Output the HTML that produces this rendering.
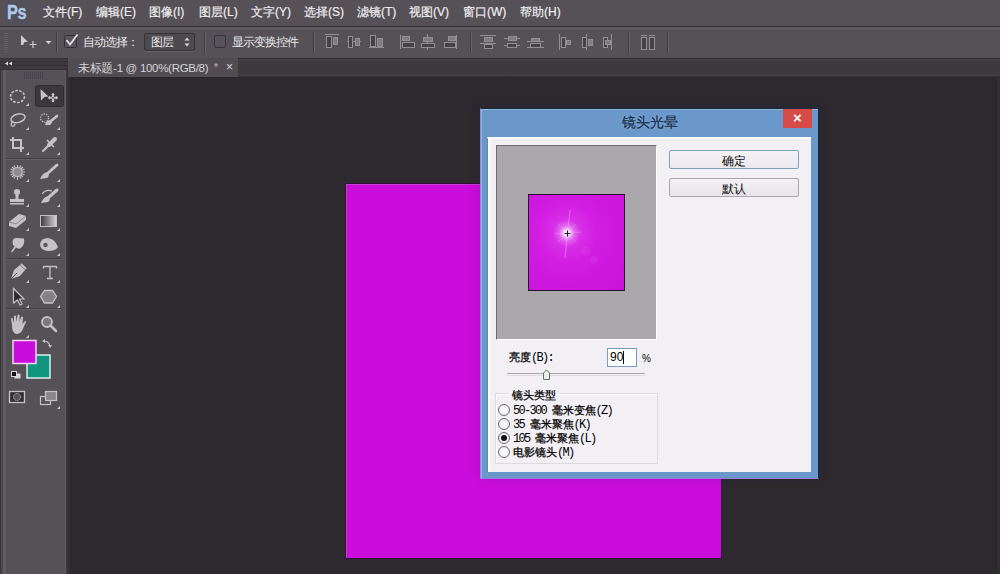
<!DOCTYPE html>
<html><head><meta charset="utf-8">
<style>
*{box-sizing:border-box;margin:0;padding:0}
html,body{width:1000px;height:574px;overflow:hidden;background:#2d292e;font-family:"Liberation Sans",sans-serif;position:relative}
.a{position:absolute}
#menubar{left:0;top:0;width:1000px;height:26px;background:#555157}
#menubar .m{position:absolute;top:4px;font-size:12px;color:#efedef;line-height:16px;white-space:nowrap;-webkit-text-stroke:0.2px #efedef}
#mline{left:0;top:26px;width:1000px;height:1px;background:#2f2c31}
#toolbar{left:0;top:27px;width:1000px;height:31px;background:linear-gradient(#5d5a5f 0,#5d5a5f 3px,#4f4b51 3px,#514d53 4px,#555157 5px)}
#tline{left:0;top:58px;width:1000px;height:1px;background:#2b282c}
#tabbar{left:69px;top:59px;width:931px;height:19px;background:linear-gradient(#48444a 0,#48444a 1px,#3d393e 1px,#3c383d 13px,#413d42 17px,#2a262b 18px)}
#tab{left:68px;top:58px;width:170px;height:19px;background:#504c52}
#canvasbg{left:70px;top:77px;width:931px;height:497px;background:#2d292e}
#panel{left:0;top:58px;width:67px;height:516px;background:#555157}
#paneltop{left:0;top:58px;width:67px;height:12px;background:#3b373c}
#pstrip{left:66px;top:58px;width:5px;height:516px;background:linear-gradient(90deg,#3c383d,#343036 60%,#29262a)}
.sep{position:absolute;width:1px;height:21px;top:32px;background:#3f3b41;box-shadow:1px 0 0 #66626a}
.txt{position:absolute;font-size:12px;color:#e8e6e8;white-space:nowrap;line-height:14px}
#doc{left:346px;top:184px;width:375px;height:374px;background:#cb0ddc;box-shadow:0 0 0 1px #2e1234,inset 1px 1px 0 #c23fd0}
#dlg{left:480px;top:108px;width:339px;height:371px;background:#6a98cb;border:1px solid #1c2a3c;border-left-color:#8a8ad6;border-bottom:1px solid #9a7fd8;box-shadow:0 0 10px rgba(30,30,90,0.18),inset 1px 1px 0 #8db6df}
#client{left:487px;top:137px;width:324px;height:335px;background:#f3f0f5;border-top:2px solid #f9fbfd;border-left:1px solid #5f8ca8;box-shadow:inset 1px 0 0 #f9fdff,inset 2px 0 0 #f9fdff}
#close{left:783px;top:109px;width:29px;height:19px;background:#d64b45}
#title{left:480px;top:114px;width:339px;text-align:center;font-size:14px;color:#15304a;line-height:17px;padding-left:1px;text-shadow:0 0 3px #8fb5dc,0 0 0.4px #15304a}
#preview{left:496px;top:145px;width:161px;height:195px;background:#aba8ab;border-top:1px solid #6f6c70;border-left:1px solid #6f6c70;border-right:1px solid #fff;border-bottom:1px solid #fff}
#pmag{left:528px;top:194px;width:97px;height:97px;background:radial-gradient(circle at 39px 39px,#d526e6 0,#d01ae0 40px,#cc12dc 80px);border:1px solid #2a1030}
.btn{position:absolute;left:669px;width:130px;height:19px;background:linear-gradient(#f3f1f3,#e6e4e8);border:1px solid #a9a7ab;border-radius:2px;text-align:center;font-size:12px;line-height:20px;color:#0a0a0a}
.dt{position:absolute;font-size:11px;color:#000;white-space:nowrap;line-height:13px;-webkit-text-stroke:0.25px #000}
.mo{font-family:"Liberation Mono",monospace;font-size:12px;letter-spacing:-1.7px;-webkit-text-stroke:0}
.radio{position:absolute;width:12px;height:12px;border-radius:50%;border:1px solid #6e6e6e;background:radial-gradient(#fff,#e4e4e4)}
</style></head><body>
<div id="menubar" class="a">
  <div class="a" style="left:6px;top:2px;width:24px;height:22px;background:#525059;border:1px solid #4c535e"></div><div class="a" style="left:7px;top:2px;font-size:17px;font-weight:bold;color:#b2c9e6;line-height:20px;letter-spacing:-0.3px;-webkit-text-stroke:0.4px #b2c9e6;transform:scale(0.96,1.14);transform-origin:0 0;text-shadow:0 0 1px #2a3d5a">Ps</div>
  <div class="m" style="left:43px">文件(F)</div>
  <div class="m" style="left:96px">编辑(E)</div>
  <div class="m" style="left:149px">图像(I)</div>
  <div class="m" style="left:199px">图层(L)</div>
  <div class="m" style="left:251px">文字(Y)</div>
  <div class="m" style="left:304px">选择(S)</div>
  <div class="m" style="left:357px">滤镜(T)</div>
  <div class="m" style="left:409px">视图(V)</div>
  <div class="m" style="left:463px">窗口(W)</div>
  <div class="m" style="left:520px">帮助(H)</div>
</div>
<div id="mline" class="a"></div>
<div id="toolbar" class="a"></div>
<div id="tline" class="a"></div>

<!-- toolbar content -->
<div class="txt" style="left:83px;top:35px;letter-spacing:-1px">自动选择：</div>
<div class="a" style="left:144px;top:33px;width:51px;height:18px;background:#4d494f;border:1px solid #353237;border-radius:2px;box-shadow:0 1px 0 #68646a"></div>
<div class="txt" style="left:151px;top:35px;letter-spacing:-1px">图层</div>
<div class="txt" style="left:232px;top:35px;letter-spacing:-1px">显示变换控件</div>
<svg class="a" style="left:0;top:0" width="1000" height="60" viewBox="0 0 1000 60"><rect x="4" y="33" width="4" height="1" fill="#625e64"/><rect x="4" y="35" width="4" height="1" fill="#625e64"/><rect x="4" y="37" width="4" height="1" fill="#625e64"/><rect x="4" y="39" width="4" height="1" fill="#625e64"/><rect x="4" y="41" width="4" height="1" fill="#625e64"/><rect x="4" y="43" width="4" height="1" fill="#625e64"/><rect x="4" y="45" width="4" height="1" fill="#625e64"/><rect x="4" y="47" width="4" height="1" fill="#625e64"/><rect x="4" y="49" width="4" height="1" fill="#625e64"/><rect x="4" y="51" width="4" height="1" fill="#625e64"/><path d="M21 35 L28 42 L24.5 42 L23 45 L21 45 Z" fill="#cfccd0"/><path d="M33 41 V48 M29.5 44.5 H36.5" stroke="#cfccd0" stroke-width="1.2"/><path d="M45.5 41 H51.5 L48.5 44 Z" fill="#d8d5d9"/><rect x="64.5" y="35.5" width="12" height="12" rx="1" fill="#57535a" stroke="#343136"/><path d="M66.5 40 L70 44.5 L77.5 34.5" fill="none" stroke="#e4e1e5" stroke-width="1.8"/><path d="M184.5 40.5 L187 37.5 L189.5 40.5 Z M184.5 43.5 L187 46.5 L189.5 43.5 Z" fill="#dcd9dd"/><rect x="214.5" y="35.5" width="11" height="12" rx="2" fill="#57535a" stroke="#353237"/><path d="M325 34.5 L339 34.5" stroke="#939094" stroke-width="1"/><rect x="326.5" y="36.5" width="5" height="11" fill="#454247" stroke="#939094" stroke-width="1"/><rect x="333.5" y="37.5" width="4" height="7" fill="#7f7c80" stroke="#939094" stroke-width="1"/><path d="M347 41.5 L361 41.5" stroke="#939094" stroke-width="1"/><rect x="348.5" y="36.5" width="4" height="11" fill="#454247" stroke="#939094" stroke-width="1"/><rect x="355.5" y="38.5" width="4" height="7" fill="#7f7c80" stroke="#939094" stroke-width="1"/><path d="M369 47.5 L384 47.5" stroke="#939094" stroke-width="1"/><rect x="370.5" y="35.5" width="5" height="11" fill="#454247" stroke="#939094" stroke-width="1"/><rect x="377.5" y="38.5" width="5" height="8" fill="#7f7c80" stroke="#939094" stroke-width="1"/><path d="M400.5 35 L400.5 49" stroke="#939094" stroke-width="1"/><rect x="402.5" y="36.5" width="7" height="4" fill="#7f7c80" stroke="#939094" stroke-width="1"/><rect x="402.5" y="42.5" width="12" height="5" fill="#454247" stroke="#939094" stroke-width="1"/><path d="M427.5 34 L427.5 50" stroke="#939094" stroke-width="1"/><rect x="423.5" y="37.5" width="9" height="4" fill="#7f7c80" stroke="#939094" stroke-width="1"/><rect x="421.5" y="43.5" width="13" height="4" fill="#454247" stroke="#939094" stroke-width="1"/><path d="M456.5 35 L456.5 49" stroke="#939094" stroke-width="1"/><rect x="448.5" y="36.5" width="7" height="4" fill="#7f7c80" stroke="#939094" stroke-width="1"/><rect x="444.5" y="42.5" width="11" height="5" fill="#454247" stroke="#939094" stroke-width="1"/><path d="M480 35.5 L496 35.5" stroke="#939094" stroke-width="1"/><path d="M480 43.5 L496 43.5" stroke="#939094" stroke-width="1"/><rect x="484.5" y="37.5" width="8" height="4" fill="#7f7c80" stroke="#939094" stroke-width="1"/><rect x="484.5" y="44.5" width="8" height="4" fill="#454247" stroke="#939094" stroke-width="1"/><path d="M504 38.5 L520 38.5" stroke="#939094" stroke-width="1"/><path d="M504 45.5 L520 45.5" stroke="#939094" stroke-width="1"/><rect x="508.5" y="36.5" width="8" height="4" fill="#7f7c80" stroke="#939094" stroke-width="1"/><rect x="507.5" y="43.5" width="9" height="4" fill="#454247" stroke="#939094" stroke-width="1"/><path d="M527 41.5 L544 41.5" stroke="#939094" stroke-width="1"/><path d="M527 47.5 L544 47.5" stroke="#939094" stroke-width="1"/><rect x="531.5" y="38.5" width="8" height="3" fill="#7f7c80" stroke="#939094" stroke-width="1"/><rect x="530.5" y="43.5" width="10" height="4" fill="#454247" stroke="#939094" stroke-width="1"/><path d="M559.5 34 L559.5 50" stroke="#939094" stroke-width="1"/><rect x="561.5" y="37.5" width="4" height="10" fill="#454247" stroke="#939094" stroke-width="1"/><rect x="566.5" y="40.5" width="4" height="4" fill="#7f7c80" stroke="#939094" stroke-width="1"/><path d="M586.5 34 L586.5 50" stroke="#939094" stroke-width="1"/><rect x="582.5" y="37.5" width="4" height="10" fill="#454247" stroke="#939094" stroke-width="1"/><rect x="588.5" y="39.5" width="4" height="6" fill="#7f7c80" stroke="#939094" stroke-width="1"/><path d="M611.5 34 L611.5 50" stroke="#939094" stroke-width="1"/><rect x="603.5" y="37.5" width="4" height="10" fill="#454247" stroke="#939094" stroke-width="1"/><rect x="605.5" y="40.5" width="5" height="4" fill="#7f7c80" stroke="#939094" stroke-width="1"/><rect x="641.5" y="37.5" width="5" height="12" fill="#454247" stroke="#939094" stroke-width="1"/><rect x="649.5" y="37.5" width="5" height="12" fill="#454247" stroke="#939094" stroke-width="1"/><path d="M641 35.5 L647 35.5" stroke="#939094" stroke-width="1"/><path d="M649 35.5 L655 35.5" stroke="#939094" stroke-width="1"/></svg>
<div class="sep" style="left:56px"></div>
<div class="sep" style="left:204px"></div>
<div class="sep" style="left:313px"></div>
<div class="sep" style="left:470px"></div>
<div class="sep" style="left:628px"></div>
<div class="sep" style="left:667px"></div>

<div id="canvasbg" class="a"></div>
<div id="tabbar" class="a"></div>
<div id="panel" class="a"></div>
<div id="paneltop" class="a"></div>
<div id="pstrip" class="a"></div>
<div class="a" style="left:0;top:70px;width:1px;height:504px;background:#363237"></div><div class="a" style="left:1px;top:70px;width:2px;height:504px;background:#4d494f"></div><div class="a" style="left:3px;top:70px;width:3px;height:504px;background:#5f5b61"></div><div class="a" style="left:65px;top:70px;width:1px;height:504px;background:#5e5a5f"></div>
<svg class="a" style="left:0;top:0" width="70" height="420" viewBox="0 0 70 420"><rect x="0" y="58" width="66" height="12" fill="#3d393e"/><path d="M0 58.5 H66" stroke="#343036" stroke-width="1"/><path d="M0 61.5 H66" stroke="#343036" stroke-width="1"/><path d="M0 65.5 H66" stroke="#343036" stroke-width="1"/><path d="M0 69.5 H66" stroke="#343036" stroke-width="1"/><path d="M5 63.5 L8 61.5 L8 65.5 Z M9 63.5 L12 61.5 L12 65.5 Z" fill="#e0dde1"/><rect x="24" y="72" width="1" height="7" fill="#47434a"/><rect x="26" y="72" width="1" height="7" fill="#47434a"/><rect x="28" y="72" width="1" height="7" fill="#47434a"/><rect x="30" y="72" width="1" height="7" fill="#47434a"/><rect x="32" y="72" width="1" height="7" fill="#47434a"/><rect x="34" y="72" width="1" height="7" fill="#47434a"/><rect x="36" y="72" width="1" height="7" fill="#47434a"/><rect x="38" y="72" width="1" height="7" fill="#47434a"/><rect x="40" y="72" width="1" height="7" fill="#47434a"/><rect x="42" y="72" width="1" height="7" fill="#47434a"/><path d="M6 158.5 H62" stroke="#403c42" stroke-width="1"/><path d="M6 159.5 H62" stroke="#625e64" stroke-width="1"/><path d="M6 258.5 H62" stroke="#403c42" stroke-width="1"/><path d="M6 259.5 H62" stroke="#625e64" stroke-width="1"/><path d="M6 308.5 H62" stroke="#403c42" stroke-width="1"/><path d="M6 309.5 H62" stroke="#625e64" stroke-width="1"/><rect x="35.5" y="85.5" width="28" height="21" rx="2" fill="#3b373c" stroke="#2e2b30"/><path d="M40.5 89 L48.5 96.5 L44.5 97 L41 100.5 Z" fill="#c5c2c6"/><path d="M53 93.5 V102 M48.5 97.8 H57.5" stroke="#c5c2c6" stroke-width="2"/><path d="M51 95 L53 93 L55 95 Z M51 100.5 L53 102.5 L55 100.5 Z M50 95.8 L48 97.8 L50 99.8 Z M56 95.8 L58 97.8 L56 99.8 Z" fill="#c5c2c6"/><circle cx="53" cy="97.8" r="0.9" fill="#3b373c"/><ellipse cx="17.5" cy="96.5" rx="7" ry="6" fill="none" stroke="#c5c2c6" stroke-width="1.6" stroke-dasharray="2.5 1.5"/><path d="M29 106 L29 103 L26 106 Z" fill="#c9c6ca"/><ellipse cx="18" cy="118.3" rx="7.2" ry="4.2" fill="none" stroke="#c5c2c6" stroke-width="1.5" transform="rotate(-15 18 118.3)"/><path d="M13 121 Q10 124 12 126 Q14 127 15 124" fill="none" stroke="#c5c2c6" stroke-width="1.3"/><path d="M29 130 L29 127 L26 130 Z" fill="#c9c6ca"/><circle cx="44.5" cy="118" r="4" fill="none" stroke="#c5c2c6" stroke-width="1.3" stroke-dasharray="1.3 1.2"/><path d="M51 121 L57 116" stroke="#c5c2c6" stroke-width="2.6" stroke-linecap="round"/><path d="M45 125 Q46 120 51 120 Q53 123 50 125 Z" fill="#c5c2c6"/><path d="M60 130 L60 127 L57 130 Z" fill="#c9c6ca"/><path d="M13 137 V148 H24 M10 140 H21 V152" fill="none" stroke="#c5c2c6" stroke-width="2"/><path d="M29 155 L29 152 L26 155 Z" fill="#c9c6ca"/><path d="M43 151 L50 144" stroke="#c5c2c6" stroke-width="2.2" stroke-linecap="round"/><path d="M49 145 L55 139" stroke="#c5c2c6" stroke-width="4" stroke-linecap="round"/><path d="M47 140 L54 147" stroke="#c5c2c6" stroke-width="1.5"/><path d="M60 155 L60 152 L57 155 Z" fill="#c9c6ca"/><path d="M17.5 165 V180 M10 172 H25 M12 167 L23 177 M23 167 L12 177 M14 165.5 L21 178.5 M21 165.5 L14 178.5 M10.5 169 L24.5 175 M24.5 169 L10.5 175" stroke="#c5c2c6" stroke-width="1.1"/><circle cx="17.5" cy="172" r="4.5" fill="#8f8c90" stroke="#c5c2c6" stroke-width="1"/><path d="M29 182 L29 179 L26 182 Z" fill="#c9c6ca"/><path d="M48 173 L57 165" stroke="#c5c2c6" stroke-width="3" stroke-linecap="round"/><path d="M40 179 Q43 172 48 172 Q50 176 47 178 Z" fill="#c5c2c6"/><path d="M60 182 L60 179 L57 182 Z" fill="#c9c6ca"/><circle cx="17" cy="192" r="3" fill="#c5c2c6"/><rect x="15.5" y="194" width="3" height="5" fill="#c5c2c6"/><rect x="10" y="199" width="14" height="3" fill="#c5c2c6"/><rect x="10" y="203" width="14" height="1.5" fill="#c5c2c6"/><path d="M29 207 L29 204 L26 207 Z" fill="#c9c6ca"/><path d="M49 197 L57 190" stroke="#c5c2c6" stroke-width="3" stroke-linecap="round"/><path d="M41 203 Q44 196 49 196 Q51 200 48 202 Z" fill="#c5c2c6"/><path d="M42 194 Q46 189 52 191" fill="none" stroke="#c5c2c6" stroke-width="1.2"/><path d="M60 207 L60 204 L57 207 Z" fill="#c9c6ca"/><path d="M9 222 L19 214 L26 216 L26 220 L16 228 L9 226 Z" fill="#c5c2c6"/><path d="M9 222 L16 224 L26 216" fill="none" stroke="#8a878b" stroke-width="1"/><path d="M29 231 L29 228 L26 231 Z" fill="#c9c6ca"/><defs><linearGradient id="gr" x1="0" x2="1"><stop offset="0" stop-color="#3a373b"/><stop offset="1" stop-color="#d8d5d9"/></linearGradient></defs><rect x="40.5" y="215.5" width="16" height="11" fill="url(#gr)" stroke="#c5c2c6"/><path d="M60 231 L60 228 L57 231 Z" fill="#c9c6ca"/><path d="M12.5 242 Q12.5 238 17 238 L24 238.5 Q25 245 21 248 Q18 249.5 16 247.5 L12 252.5 L11 251.5 L14.5 246.5 Q12.5 245 12.5 242 Z" fill="#c5c2c6"/><path d="M29 256 L29 253 L26 256 Z" fill="#c9c6ca"/><path d="M40 244 Q41 238 48 238 Q55 239 58 247 Q56 251 48 251 Q40 250 40 244 Z" fill="#c5c2c6"/><circle cx="45.5" cy="245" r="2.3" fill="#5f5b61"/><path d="M60 256 L60 253 L57 256 Z" fill="#c9c6ca"/><path d="M11 279 L14 270 L20 265 L25 270 L20 276 Z" fill="#c5c2c6"/><path d="M11 279 L17 273" stroke="#555157" stroke-width="1"/><path d="M21 264 L26 269" stroke="#c5c2c6" stroke-width="2"/><path d="M29 283 L29 280 L26 283 Z" fill="#c9c6ca"/><path d="M43.5 266.5 H56.5 M50 266.5 V278 M47 278.5 H53 M43.5 266 V268.5 M56.5 266 V268.5" fill="none" stroke="#c5c2c6" stroke-width="1.3"/><path d="M60 283 L60 280 L57 283 Z" fill="#c9c6ca"/><path d="M13.5 288.5 L24 299 L19.5 299 L22 304 L20 305 L17.5 300 L13.5 303 Z" fill="#2e2b30" stroke="#c5c2c6" stroke-width="1.2"/><path d="M29 308 L29 305 L26 308 Z" fill="#c9c6ca"/><path d="M44.5 290.5 H52.5 L56.5 296.5 L52.5 303 H44.5 L40.5 296.5 Z" fill="#858286" stroke="#c5c2c6" stroke-width="1.3"/><path d="M60 308 L60 305 L57 308 Z" fill="#c9c6ca"/><path d="M12 325 L11 319 Q11 318 12.5 318 L14 323 L14 316 Q15 315 16 316 L16.5 322 L17.5 315 Q18.5 314 19.5 315 L19.5 322 L21 317 Q22 316 23 317 L22.5 324 L25 321 Q26 321 26 322 L22 331 Q20 334 16 334 Q12 333 12 325 Z" fill="#c5c2c6"/><path d="M29 338 L29 335 L26 338 Z" fill="#c9c6ca"/><circle cx="47" cy="322" r="5" fill="#7d7a7e" stroke="#c5c2c6" stroke-width="1.8"/><path d="M50.5 325.5 L56 331" stroke="#c5c2c6" stroke-width="2.5" stroke-linecap="round"/><rect x="27" y="355" width="23" height="23" fill="#11957f" stroke="#d9f0ec" stroke-width="1.5"/><rect x="13" y="340.5" width="23" height="23" fill="#c90edb" stroke="#f1d6f5" stroke-width="1.5"/><path d="M43 341 Q49 341 50 346" fill="none" stroke="#c5c2c6" stroke-width="1.2"/><path d="M42 341 L45 339 L45 343 Z M50 348 L48 345 L52 345 Z" fill="#c5c2c6"/><rect x="14.5" y="373.5" width="6" height="5" fill="#d9d6da"/><rect x="11.5" y="371.5" width="5" height="5" fill="#111" stroke="#d9d6da" stroke-width="1"/><rect x="9.5" y="391.5" width="15" height="11" fill="#333034" stroke="#c5c2c6" stroke-width="1.3"/><circle cx="17" cy="397" r="3.5" fill="#555157" stroke="#c5c2c6" stroke-width="1" stroke-dasharray="1.2 1"/><rect x="40.5" y="396.5" width="10" height="8" fill="#555157" stroke="#c5c2c6" stroke-width="1.2"/><rect x="45.5" y="391.5" width="11" height="9" fill="#8a878b" stroke="#c5c2c6" stroke-width="1.2"/><path d="M60 409 L60 406 L57 409 Z" fill="#c9c6ca"/></svg>
<div id="tab" class="a"></div>
<div class="a" style="left:996px;top:78px;width:1px;height:496px;background:#29252a"></div><div class="a" style="left:997px;top:78px;width:3px;height:496px;background:#322e34"></div>
<div class="txt" style="left:78px;top:61px;color:#d6d4d6;font-size:11.5px;letter-spacing:-0.3px">未标题-1 @ 100%(RGB/8)</div>
<div class="txt" style="left:214px;top:61px;color:#bdbabe;font-size:10px">*</div>
<div class="txt" style="left:226px;top:60px;color:#d6d4d6;font-size:12px">×</div>



<div id="doc" class="a"></div>

<div id="dlg" class="a"></div>
<div id="client" class="a"></div>
<div id="close" class="a"></div>
<div class="a" style="left:783px;top:109px;width:29px;height:19px;text-align:center;color:#fff;font-size:15px;line-height:18px;font-weight:bold">×</div>
<div id="title" class="a">镜头光晕</div>
<div id="preview" class="a"></div>
<div id="pmag" class="a"><div class="a" style="left:-1px;top:-1px;width:97px;height:98px;background:radial-gradient(circle at 39px 39px,#ffffff 0px,#fef0fe 2.5px,#f0a8f6 4.5px,#e060ec 8px,rgba(220,60,235,0.5) 14px,rgba(205,20,221,0) 30px)"></div>
<svg class="a" style="left:-1px;top:-1px" width="97" height="98"><path d="M42 16 L37 64" stroke="rgba(250,190,252,0.35)" stroke-width="1.2"/><path d="M26 40 L54 38" stroke="rgba(250,190,252,0.25)" stroke-width="1"/><circle cx="58" cy="57" r="5" fill="rgba(235,140,242,0.1)"/><circle cx="66" cy="66" r="4" fill="rgba(235,140,242,0.1)"/><path d="M30 30 L48 48 M48 30 L30 48" stroke="rgba(250,200,252,0.25)" stroke-width="0.8"/><path d="M36.5 39.5 H42.5 M39.5 36.5 V42.5" stroke="#222" stroke-width="1.2"/></svg></div>
<div class="btn" style="top:150px;border-color:#7ea1bd;background:linear-gradient(#f4f2f4,#eceaee)">确定</div>
<div class="btn" style="top:178px">默认</div>
<div class="dt" style="left:509px;top:351px">亮度<span class="mo">(B):</span></div>
<div class="a" style="left:607px;top:348px;width:30px;height:19px;background:#fff;border:1px solid #7a9cc0"></div>
<div class="dt" style="left:610px;top:351px;font-size:12px;-webkit-text-stroke:0">90</div>
<div class="a" style="left:623px;top:351px;width:1px;height:13px;background:#111"></div>
<div class="dt" style="left:642px;top:352px;font-size:10px;-webkit-text-stroke:0">%</div>
<div class="a" style="left:507px;top:373px;width:138px;height:3px;background:#f0eef1;border-top:1px solid #a9a7ab;border-bottom:1px solid #e0dee2;border-radius:1px"></div>
<svg class="a" style="left:540px;top:367px" width="14" height="14"><path d="M3.5 12.5 V6 L6.5 3 L9.5 6 V12.5 Z" fill="#e8f0e8" stroke="#5c7a5c" stroke-width="1"/></svg>
<div class="a" style="left:495px;top:393px;width:163px;height:71px;border:1px solid #dcdadd;box-shadow:inset 1px 1px 0 #fff"></div>
<div class="a" style="left:509px;top:388px;width:50px;height:12px;background:#f3f0f5"></div>
<div class="dt" style="left:512px;top:389px">镜头类型</div>
<div class="radio" style="left:498px;top:404px"></div>
<div class="radio" style="left:498px;top:418px"></div>
<div class="radio" style="left:498px;top:432px"><div class="a" style="left:2px;top:2px;width:6px;height:6px;border-radius:50%;background:#111"></div></div>
<div class="radio" style="left:498px;top:446px"></div>
<div class="dt" style="left:513px;top:404px"><span class="mo">50-300 </span>毫米变焦<span class="mo">(Z)</span></div>
<div class="dt" style="left:513px;top:418px"><span class="mo">35 </span>毫米聚焦<span class="mo">(K)</span></div>
<div class="dt" style="left:513px;top:432px"><span class="mo">105 </span>毫米聚焦<span class="mo">(L)</span></div>
<div class="dt" style="left:513px;top:446px">电影镜头<span class="mo">(M)</span></div>

</body></html>
